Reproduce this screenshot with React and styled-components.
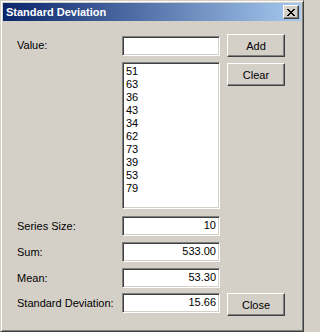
import styled, { createGlobalStyle } from 'styled-components'

const GlobalStyle = createGlobalStyle`
  html, body {
    margin: 0;
    padding: 0;
    background: #d4d0c8;
  }
  body {
    font-family: "Liberation Sans", Arial, sans-serif;
    font-size: 11px;
    color: #000;
  }
`

const Window = styled.div`
  box-sizing: border-box;
  width: 304px;
  height: 332px;
  padding: 3px;
  background: #d4d0c8;
  border: 1px solid;
  border-color: #d4d0c8 #404040 #404040 #d4d0c8;
  box-shadow: inset 1px 1px #fff, inset -1px -1px #808080;
`

const TitleBar = styled.div`
  height: 18px;
  margin: -1px -1px 0 -1px;
  display: flex;
  align-items: center;
  justify-content: space-between;
  padding: 0 2px 0 3px;
  background: linear-gradient(to right, #0a246a, #a6caf0);
`

const Title = styled.span`
  color: #fff;
  font-weight: bold;
  font-size: 11px;
`

const CloseBox = styled.div`
  box-sizing: border-box;
  width: 16px;
  height: 14px;
  display: flex;
  align-items: center;
  justify-content: center;
  background: #d4d0c8;
  border: 1px solid;
  border-color: #fff #404040 #404040 #fff;
  box-shadow: inset -1px -1px #808080;
`

const Body = styled.div`
  display: flex;
  flex-direction: column;
  padding: 13px 0 0 13px;
`

const Row = styled.div`
  display: grid;
  grid-template-columns: 105px 98px 65px;
  align-items: ${p => p.$align || 'center'};
  height: ${p => p.$height || 20}px;
  margin-top: ${p => p.$gap || 0}px;
`

const Label = styled.div`
  line-height: 13px;
  margin-top: ${p => p.$offset || 0}px;
`

const Sunken = styled.div`
  box-sizing: border-box;
  background: #fff;
  border: 1px solid;
  border-color: #808080 #fff #fff #808080;
  box-shadow: inset 1px 1px #404040, inset -1px -1px #d4d0c8;
`

const Field = styled(Sunken)`
  height: 20px;
  padding: 0 3px;
  line-height: 16px;
  text-align: right;
`

const ListBox = styled(Sunken)`
  grid-column: 2;
  height: 147px;
  padding: 2px 3px;
`

const Item = styled.div`
  line-height: 13px;
`

const Button = styled.button`
  box-sizing: border-box;
  grid-column: 3;
  justify-self: end;
  width: 58px;
  height: 23px;
  padding: 0;
  margin-top: ${p => p.$offset || 0}px;
  font-family: "Liberation Sans", Arial, sans-serif;
  font-size: 11px;
  color: #000;
  background: #d4d0c8;
  border: 1px solid;
  border-color: #fff #404040 #404040 #fff;
  box-shadow: inset -1px -1px #808080;
`

const values = [51, 63, 36, 43, 34, 62, 73, 39, 53, 79]

const stats = [
  { label: 'Series Size:', value: '10', gap: 7 },
  { label: 'Sum:', value: '533.00', gap: 6 },
  { label: 'Mean:', value: '53.30', gap: 6 },
]

const App = () => {
  return (
    <>
      <GlobalStyle />
      <Window>
        <TitleBar>
          <Title>Standard Deviation</Title>
          <CloseBox>
            <svg width="8" height="7" viewBox="0 0 8 7" shapeRendering="crispEdges">
              <path
                fill="#000"
                d="M0 0h2v1h-2zM6 0h2v1h-2zM1 1h2v1h-2zM5 1h2v1h-2zM2 2h4v1h-4zM3 3h2v1h-2zM2 4h4v1h-4zM1 5h2v1h-2zM5 5h2v1h-2zM0 6h2v1h-2zM6 6h2v1h-2z"
              />
            </svg>
          </CloseBox>
        </TitleBar>
        <Body>
          <Row $height={23}>
            <Label>Value:</Label>
            <Field />
            <Button>Add</Button>
          </Row>

          <Row $height={147} $gap={5} $align="start">
            <ListBox>
              {values.map(v => (
                <Item key={v}>{v}</Item>
              ))}
            </ListBox>
            <Button $offset={1}>Clear</Button>
          </Row>

          {stats.map(s => (
            <Row key={s.label} $gap={s.gap}>
              <Label>{s.label}</Label>
              <Field>{s.value}</Field>
            </Row>
          ))}

          <Row $height={23} $gap={5} $align="start">
            <Label $offset={4}>Standard Deviation:</Label>
            <Field>15.66</Field>
            <Button>Close</Button>
          </Row>
        </Body>
      </Window>
    </>
  )
}

export default App
